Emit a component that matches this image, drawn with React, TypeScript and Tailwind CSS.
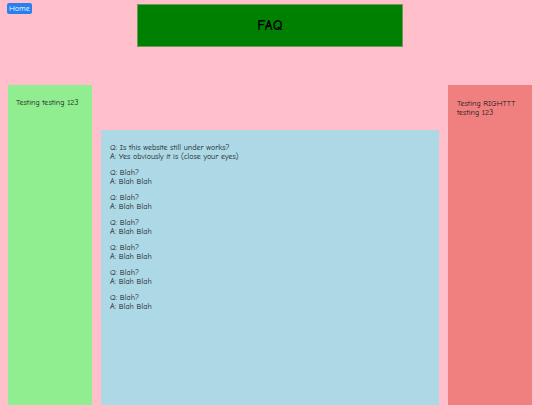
const qa = [
  { q: "Is this website still under works?", a: "Yes obviously it is (close your eyes)" },
  { q: "Blah?", a: "Blah Blah" },
  { q: "Blah?", a: "Blah Blah" },
  { q: "Blah?", a: "Blah Blah" },
  { q: "Blah?", a: "Blah Blah" },
  { q: "Blah?", a: "Blah Blah" },
  { q: "Blah?", a: "Blah Blah" },
]

export default function App() {
  return (
    <div
      className="w-[540px] h-[405px] overflow-hidden bg-[#ffc0cb] text-[#1a1a1a]"
      style={{ fontFamily: '"Comic Sans MS", "Comic Neue", cursive, sans-serif' }}
    >
      <div className="grid grid-cols-[1fr_266px_1fr]">
        <div className="flex items-start pl-[7px] pt-[3px]">
          <button className="bg-[#2a7ff0] text-white text-[8px] leading-[11px] px-[2px] rounded-[2px]">
            Home
          </button>
        </div>
        <div className="mt-[4px] h-[43px] bg-[#008000] border border-[#6c9c5c] flex items-center justify-center">
          <h1 className="text-[14px] font-bold text-black tracking-wide">FAQ</h1>
        </div>
        <div />
      </div>

      <div className="flex items-start gap-[9px] pl-[8px]">
        <aside className="mt-[38px] w-[84px] h-[340px] bg-[#90ee90] px-[8px] pt-[14px] text-[8px] leading-[8.5px]">
          Testing testing 123
        </aside>

        <main className="mt-[83px] w-[338px] h-[300px] bg-[#add8e6] px-[9px] pt-[14px] text-[8px] leading-[8.5px] flex flex-col gap-[8px]">
          {qa.map((item, i) => (
            <div key={i}>
              <p>Q: {item.q}</p>
              <p>A: {item.a}</p>
            </div>
          ))}
        </main>

        <aside className="mt-[38px] w-[84px] h-[340px] bg-[#f08080] px-[9px] pt-[15px] text-[8px] leading-[8.5px]">
          Testing RIGHTTT testing 123
        </aside>
      </div>
    </div>
  )
}
